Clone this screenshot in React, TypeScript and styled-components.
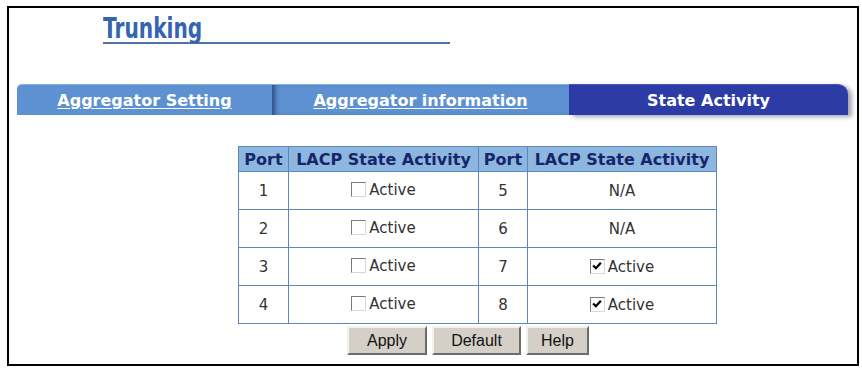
import styled, { createGlobalStyle } from 'styled-components';

const GlobalStyle = createGlobalStyle`
  html, body {
    margin: 0;
    padding: 0;
    background: #ffffff;
  }
  body {
    font-family: "DejaVu Sans", Verdana, sans-serif;
  }
`;

const Frame = styled.div`
  box-sizing: border-box;
  margin: 6px 0 0 7px;
  width: 852px;
  height: 360px;
  border: 2px solid #000;
  padding: 8px 0 0 8px;
`;

const TitleBar = styled.div`
  margin-left: 86px;
  width: 347px;
  height: 26px;
  border-bottom: 2px solid #5073a8;
  overflow: visible;
`;

const Title = styled.div`
  display: inline-block;
  font-family: "DejaVu Sans", "Liberation Sans", sans-serif;
  font-weight: 900;
  font-size: 28px;
  line-height: 26px;
  color: #3564b0;
  transform: scaleX(0.72);
  transform-origin: left center;
`;

const Tabs = styled.div`
  display: flex;
  margin-top: 40px;
  height: 31px;
  width: 836px;
`;

const Tab = styled.div<{ $w: number; $active?: boolean; $first?: boolean; $last?: boolean }>`
  box-sizing: border-box;
  width: ${(p) => p.$w}px;
  display: flex;
  align-items: center;
  justify-content: center;
  background: ${(p) => (p.$active ? '#2c3ba6' : '#5d91d2')};
  border-top: 1px solid ${(p) => (p.$active ? '#4655bd' : '#86b0e2')};
  border-top-left-radius: ${(p) => (p.$first ? '5px' : '0')};
  border-top-right-radius: ${(p) => (p.$last ? '10px' : '0')};
  box-shadow: ${(p) =>
    p.$last
      ? '4px 2px 4px rgba(60,60,90,0.45)'
      : p.$first
        ? 'none'
        : 'inset 6px 0 5px -3px rgba(25,45,95,0.7)'};
  color: #fff;
  font-weight: bold;
  font-size: 16px;
  padding-top: 1px;
`;

const TabLink = styled.span<{ $link?: boolean }>`
  text-decoration: ${(p) => (p.$link ? 'underline' : 'none')};
  text-underline-offset: 2px;
`;

const Table = styled.table`
  margin: 31px 0 0 221px;
  border-collapse: collapse;
  border: 1px solid #5a88bf;
`;

const Th = styled.th<{ $w: number }>`
  width: ${(p) => p.$w}px;
  height: 24px;
  padding: 0;
  background: #8db7df;
  border: 1px solid #5a88bf;
  color: #17266a;
  font-size: 16px;
  font-weight: bold;
  white-space: nowrap;
`;

const Td = styled.td`
  height: 37px;
  padding: 0;
  border: 1px solid #5a88bf;
  text-align: center;
  color: #333;
  font-size: 15px;
`;

const CheckLabel = styled.span`
  display: inline-flex;
  align-items: flex-end;
  gap: 3px;
`;

const Box = styled.span`
  box-sizing: border-box;
  display: inline-flex;
  align-items: center;
  justify-content: center;
  width: 15px;
  height: 15px;
  margin-bottom: 2px;
  background: #fff;
  border-top: 1px solid #7a7a7a;
  border-left: 1px solid #7a7a7a;
  border-right: 1px solid #d8d8d8;
  border-bottom: 1px solid #d8d8d8;
`;

const Buttons = styled.div`
  display: flex;
  gap: 5px;
  margin: 2px 0 0 330px;
`;

const Button = styled.button<{ $w: number }>`
  box-sizing: border-box;
  width: ${(p) => p.$w}px;
  height: 29px;
  background: #d4d0c8;
  border: 2px solid;
  border-color: #f4f2ee #6e6c68 #6e6c68 #f4f2ee;
  font-family: "Liberation Sans", Arial, sans-serif;
  font-size: 16px;
  color: #111;
  padding: 0;
`;

function Check({ checked }: { checked: boolean }) {
  return (
    <CheckLabel>
      <Box>
        {checked && (
          <svg width="10" height="10" viewBox="0 0 9 9">
            <path d="M1 4 L3.5 6.5 L8 1.5" stroke="#000" strokeWidth="2" fill="none" />
          </svg>
        )}
      </Box>
      Active
    </CheckLabel>
  );
}

const rows: { left: number; right: number; state: 'na' | 'off' | 'on' }[] = [
  { left: 1, right: 5, state: 'na' },
  { left: 2, right: 6, state: 'na' },
  { left: 3, right: 7, state: 'on' },
  { left: 4, right: 8, state: 'on' },
];

function App() {
  return (
    <>
      <GlobalStyle />
      <Frame>
        <TitleBar>
          <Title>Trunking</Title>
        </TitleBar>
        <Tabs>
          <Tab $w={255} $first>
            <TabLink $link>Aggregator Setting</TabLink>
          </Tab>
          <Tab $w={297}>
            <TabLink $link>Aggregator information</TabLink>
          </Tab>
          <Tab $w={279} $active $last>
            <TabLink>State Activity</TabLink>
          </Tab>
        </Tabs>
        <Table>
          <thead>
            <tr>
              <Th $w={49}>Port</Th>
              <Th $w={189}>LACP State Activity</Th>
              <Th $w={48}>Port</Th>
              <Th $w={188}>LACP State Activity</Th>
            </tr>
          </thead>
          <tbody>
            {rows.map((r) => (
              <tr key={r.left}>
                <Td>{r.left}</Td>
                <Td>
                  <Check checked={false} />
                </Td>
                <Td>{r.right}</Td>
                <Td>{r.state === 'na' ? 'N/A' : <Check checked={r.state === 'on'} />}</Td>
              </tr>
            ))}
          </tbody>
        </Table>
        <Buttons>
          <Button $w={80}>Apply</Button>
          <Button $w={89}>Default</Button>
          <Button $w={63}>Help</Button>
        </Buttons>
      </Frame>
    </>
  );
}

export default App;
